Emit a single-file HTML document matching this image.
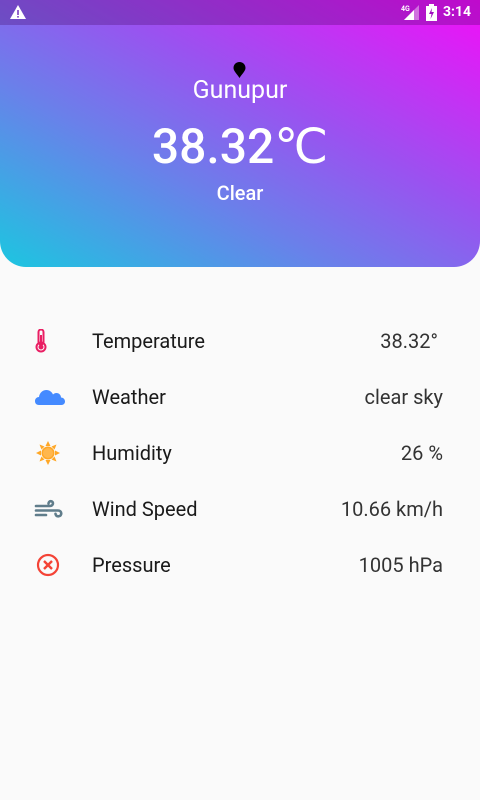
<!DOCTYPE html>
<html><head><meta charset="utf-8"><style>
*{margin:0;padding:0;box-sizing:border-box}
body{width:480px;height:800px;background:#fafafa;font-family:"Roboto","Liberation Sans",sans-serif;position:relative;overflow:hidden}
.hdr{position:absolute;left:0;top:0;width:480px;height:267px;border-radius:0 0 26px 26px;background:linear-gradient(to top right,#1cc6e0 0%,#6a80ea 35%,#9a52f0 60%,#f20ef8 100%)}
.sb{position:absolute;left:0;top:0;width:480px;height:25px;background:rgba(60,0,90,0.28)}
.c{position:absolute;left:0;width:480px;text-align:center;color:#fff}
.row{position:absolute;left:0;width:480px;height:30px}
.lbl{position:absolute;left:92px;top:0;font-size:20px;color:#1a1a1a;line-height:30px}
.val{position:absolute;right:37px;top:0;font-size:20px;color:#333;line-height:30px}
.ic{position:absolute;left:34px;top:3px;width:32px;height:24px}
</style></head><body>
<div class="hdr"></div>
<div class="sb"></div>
<svg style="position:absolute;left:10px;top:5px" width="16" height="15" viewBox="0 0 16 15"><path d="M8 0L16 14H0Z" fill="#fff"/><rect x="7.2" y="5" width="1.6" height="5" fill="#7a3cc0"/><rect x="7.2" y="11" width="1.6" height="1.6" fill="#7a3cc0"/></svg>
<div style="position:absolute;left:401px;top:5px;color:#fff;font-size:7px;font-weight:bold">4G</div>
<svg style="position:absolute;left:404px;top:5px" width="15" height="15"><path d="M15 0V15H0Z" fill="rgba(255,255,255,0.4)"/><path d="M10 5V15H0Z" fill="#fff"/></svg>
<svg style="position:absolute;left:426px;top:4px" width="11" height="17"><rect x="0" y="2" width="11" height="15" fill="#fff"/><rect x="3" y="0" width="5" height="3" fill="#fff"/><path d="M6 4L3 10H5.5L4.5 15L8 8H5.5Z" fill="#a010c0"/></svg>
<div style="position:absolute;left:443px;top:4px;color:#fff;font-size:14px;font-weight:bold">3:14</div>
<svg style="position:absolute;left:233px;top:62px" width="13" height="16" viewBox="0 0 13 16"><path d="M6.5 0C3 0 0.5 2.5 0.5 6C0.5 9 4 12 6.5 16C9 12 12.5 9 12.5 6C12.5 2.5 10 0 6.5 0Z" fill="#000"/></svg>
<div class="c" style="top:76px;font-size:25px">Gunupur</div>
<div class="c" style="top:118px;font-size:48px;font-weight:500">38.32℃</div>
<div class="c" style="top:181px;font-size:20px;font-weight:500">Clear</div>

<div class="row" style="top:326px"><svg class="ic" viewBox="0 0 32 24"><rect x="4.5" y="0.5" width="5" height="15" rx="2.5" fill="none" stroke="#e91e63" stroke-width="2"/><circle cx="7" cy="18" r="4.5" fill="none" stroke="#e91e63" stroke-width="2"/><circle cx="7" cy="18" r="2.5" fill="#e91e63"/><rect x="6" y="6" width="2" height="11" fill="#e91e63"/></svg><div class="lbl">Temperature</div><div class="val" style="right:42px">38.32°</div></div>
<div class="row" style="top:382px"><svg class="ic" viewBox="0 0 32 24"><path d="M5 20C2 20 1 18 1 16C1 13.5 3 12 5 12C5.5 8 8.5 5 12.5 5C15.5 5 18 7 19 9.5C20 8.5 21 8 22.5 8C25 8 27 10 27 12.5C29.5 12.5 31 14.5 31 16.5C31 18.5 29.5 20 27.5 20Z" fill="#448aff"/></svg><div class="lbl">Weather</div><div class="val">clear sky</div></div>
<div class="row" style="top:438px"><svg class="ic" viewBox="0 0 32 24"><g fill="#ffa726"><circle cx="14" cy="12" r="6.5"/><path d="M14 0L16.5 5H11.5ZM14 24L16.5 19H11.5ZM2 12L7 9.5V14.5ZM26 12L21 9.5V14.5ZM5.5 3.5L10.5 5.5L7.5 8.5ZM22.5 3.5L20.5 8.5L17.5 5.5ZM5.5 20.5L7.5 15.5L10.5 18.5ZM22.5 20.5L17.5 18.5L20.5 15.5Z"/></g><circle cx="14" cy="12" r="5" fill="#ffb74d"/></svg><div class="lbl">Humidity</div><div class="val">26 %</div></div>
<div class="row" style="top:494px"><svg class="ic" viewBox="0 0 32 24"><g fill="none" stroke="#607d8b" stroke-width="2.6" stroke-linecap="round"><path d="M2 9H16C19.5 9 20 4.5 17 4.2C15.5 4 14.5 5.5 14.5 6.5"/><path d="M2 13.5H24C28 13.5 28.5 19 24.5 19.3C22.5 19.5 21.5 18 21.5 16.8"/><path d="M2 18H12"/></g></svg><div class="lbl">Wind Speed</div><div class="val">10.66 km/h</div></div>
<div class="row" style="top:550px"><svg class="ic" viewBox="0 0 32 24"><circle cx="14" cy="12" r="10" fill="none" stroke="#f44336" stroke-width="2.2"/><path d="M10 8L18 16M18 8L10 16" stroke="#f44336" stroke-width="2.4"/></svg><div class="lbl">Pressure</div><div class="val">1005 hPa</div></div>
</body></html>
